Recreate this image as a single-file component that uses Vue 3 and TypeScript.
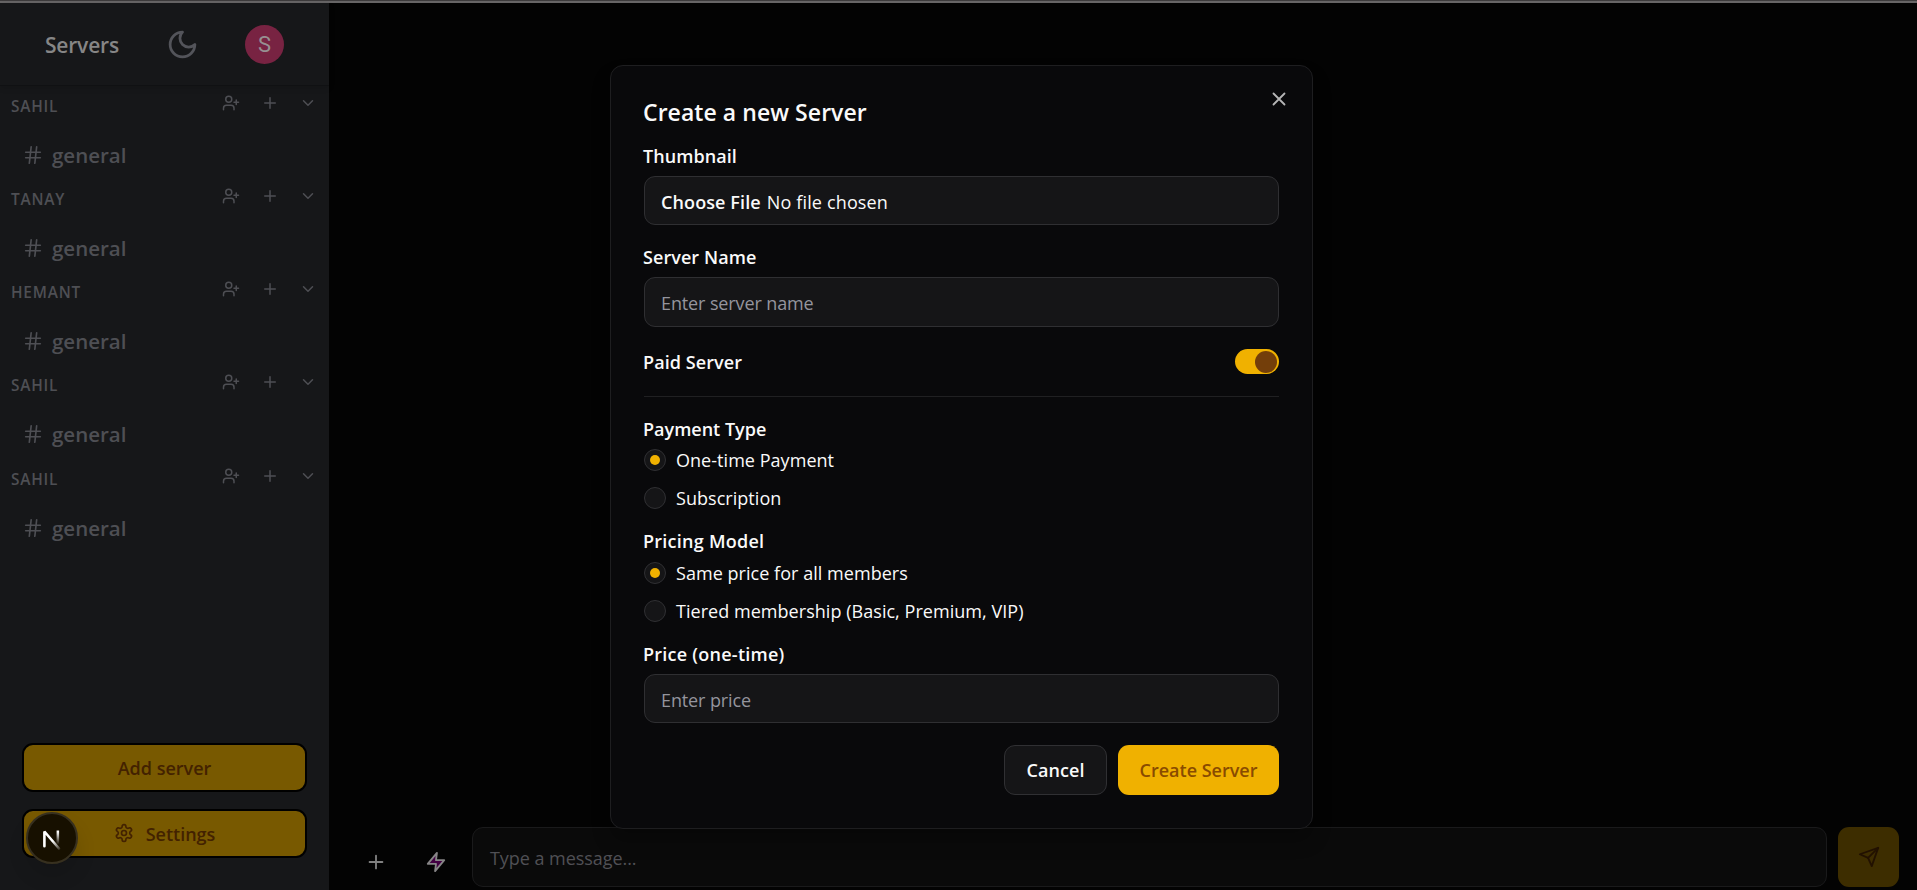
<script setup lang="ts">
import { ref } from 'vue'

interface Server { id: number; name: string }

const servers = ref<Server[]>([
  { id: 1, name: 'SAHIL' },
  { id: 2, name: 'TANAY' },
  { id: 3, name: 'HEMANT' },
  { id: 4, name: 'SAHIL' },
  { id: 5, name: 'SAHIL' },
])
const paymentTypes = ['One-time Payment', 'Subscription']
const pricingModels = ['Same price for all members', 'Tiered membership (Basic, Premium, VIP)']
const payment = ref(0)
const pricing = ref(0)
const paid = ref(true)
</script>

<template>
  <div class="page">
    <div class="edge"></div>
    <div class="shell">
      <aside class="sidebar">
        <header class="top">
          <h1>Servers</h1>
          <svg class="moon" viewBox="0 0 24 24"><path d="M12 3a6 6 0 0 0 9 9 9 9 0 1 1-9-9Z" /></svg>
          <div class="avatar">S</div>
        </header>
        <nav class="list">
          <section v-for="s in servers" :key="s.id" class="server">
            <div class="server-head">
              <span class="server-name">{{ s.name }}</span>
              <svg class="i-user" viewBox="0 0 24 24"><path d="M16 21v-2a4 4 0 0 0-4-4H6a4 4 0 0 0-4 4v2" /><circle cx="9" cy="7" r="4" /><path d="M19 8v6M22 11h-6" /></svg>
              <svg class="i-plus" viewBox="0 0 24 24"><path d="M5 12h14M12 5v14" /></svg>
              <svg class="i-chev" viewBox="0 0 24 24"><path d="m6 9 6 6 6-6" /></svg>
            </div>
            <div class="channel">
              <svg class="i-hash" viewBox="0 0 24 24"><path d="M4 9h16M4 15h16M10 3 8 21M16 3l-2 18" /></svg>
              <span class="general">general</span>
            </div>
          </section>
        </nav>
        <footer class="side-actions">
          <button class="gold"><span>Add server</span></button>
          <button class="gold">
            <svg class="i-gear" viewBox="0 0 24 24"><path d="M12.22 2h-.44a2 2 0 0 0-2 2v.18a2 2 0 0 1-1 1.73l-.43.25a2 2 0 0 1-2 0l-.15-.08a2 2 0 0 0-2.73.73l-.22.38a2 2 0 0 0 .73 2.73l.15.1a2 2 0 0 1 1 1.72v.51a2 2 0 0 1-1 1.74l-.15.09a2 2 0 0 0-.73 2.73l.22.38a2 2 0 0 0 2.73.73l.15-.08a2 2 0 0 1 2 0l.43.25a2 2 0 0 1 1 1.73V20a2 2 0 0 0 2 2h.44a2 2 0 0 0 2-2v-.18a2 2 0 0 1 1-1.73l.43-.25a2 2 0 0 1 2 0l.15.08a2 2 0 0 0 2.73-.73l.22-.39a2 2 0 0 0-.73-2.73l-.15-.08a2 2 0 0 1-1-1.74v-.5a2 2 0 0 1 1-1.74l.15-.09a2 2 0 0 0 .73-2.73l-.22-.38a2 2 0 0 0-2.73-.73l-.15.08a2 2 0 0 1-2 0l-.43-.25a2 2 0 0 1-1-1.73V4a2 2 0 0 0-2-2z" /><circle cx="12" cy="12" r="3" /></svg>
            <span>Settings</span>
          </button>
        </footer>
      </aside>
      <main class="chat">
        <div class="composer">
          <svg class="c-plus" viewBox="0 0 24 24"><path d="M5 12h14M12 5v14" /></svg>
          <svg class="c-zap" viewBox="0 0 24 24"><path d="M13 2 3 14h9l-1 8 10-12h-9Z" /></svg>
          <div class="message"><span>Type a message...</span></div>
          <button class="send">
            <svg viewBox="0 0 24 24"><path d="m22 2-7 20-4-9-9-4Z" /><path d="M22 2 11 13" /></svg>
          </button>
        </div>
      </main>
    </div>

    <div class="dev-badge">
      <svg viewBox="0 0 52 52">
        <defs>
          <linearGradient id="stem" x1="0" y1="0" x2="0" y2="1"><stop offset="0.1" stop-color="#fff" /><stop offset="1" stop-color="#fff" stop-opacity="0" /></linearGradient>
          <linearGradient id="diag" gradientUnits="userSpaceOnUse" x1="28" y1="28" x2="35" y2="37"><stop offset="0" stop-color="#fff" /><stop offset="1" stop-color="#fff" stop-opacity="0.1" /></linearGradient>
        </defs>
        <path d="M18.4 34.3V19.5L33 36.5" fill="none" stroke="url(#diag)" stroke-width="2.6" stroke-linejoin="bevel" />
        <rect x="30.6" y="18.5" width="2.5" height="14" fill="url(#stem)" />
      </svg>
    </div>

    <div class="dialog" role="dialog">
      <svg class="close" viewBox="0 0 24 24"><path d="M18 6 6 18M6 6l12 12" /></svg>
      <h2>Create a new Server</h2>
      <label class="thumb-label">Thumbnail</label>
      <div class="field"><span class="choose">Choose File</span><span class="nofile">No file chosen</span></div>
      <label class="name-label">Server Name</label>
      <div class="field tall"><span class="ph">Enter server name</span></div>
      <div class="paid">
        <span class="lbl">Paid Server</span>
        <button class="switch" :class="{ on: paid }" @click="paid = !paid"><i></i></button>
      </div>
      <hr />
      <label class="type-label">Payment Type</label>
      <div v-for="(p, i) in paymentTypes" :key="p" class="radio" @click="payment = i">
        <i class="dot" :class="{ on: payment === i }"></i><span>{{ p }}</span>
      </div>
      <label class="group-label model-label">Pricing Model</label>
      <div v-for="(p, i) in pricingModels" :key="p" class="radio" @click="pricing = i">
        <i class="dot" :class="{ on: pricing === i }"></i><span>{{ p }}</span>
      </div>
      <label class="group-label price-label">Price (one-time)</label>
      <div class="field"><span class="ph">Enter price</span></div>
      <div class="actions">
        <button class="cancel"><span>Cancel</span></button>
        <button class="create"><span>Create Server</span></button>
      </div>
    </div>
  </div>
</template>

<style>
html, body { margin: 0; background: #030303; overflow: hidden; }
</style>

<style scoped>
* { box-sizing: border-box; }
.page {
  position: relative; width: 100vw; height: 890px; overflow: hidden;
  background: #030303; color: #fafafa;
  font-family: "Open Sans", "Noto Sans", sans-serif; font-size: 18px;
  display: flex; flex-direction: column;
}
svg { fill: none; stroke: currentColor; stroke-width: 2; stroke-linecap: round; stroke-linejoin: round; flex: none; }
button { font: inherit; margin: 0; padding: 0; border: 0; }
span { white-space: nowrap; }
.edge { flex: none; height: 3px; background: #676566; border-top: 1px solid #3d3b3c; }
.shell { flex: 1; display: flex; min-height: 0; }
.sidebar { width: 329px; background: #161719; display: flex; flex-direction: column; }
.top { height: 83px; display: flex; align-items: center; padding-left: 45px; border-bottom: 1px solid #101113; box-shadow: 0 2px 6px rgba(0, 0, 0, .12); }
h1 { margin: 1px 0 0; font-size: 21px; line-height: 28px; font-weight: 600; color: #868686; width: 121px; letter-spacing: -.2px; }
.moon { width: 33px; height: 33px; color: #53545a; }
.avatar { margin-left: 46px; width: 39px; height: 39px; border-radius: 50%; background: #782342; color: #979092; font: 22px Roboto, sans-serif; display: flex; align-items: center; justify-content: center; }
.list { flex: 1; }
.server { height: 93.25px; }
.server-head { height: 40px; display: flex; align-items: center; padding: 0 12px 0 11px; color: #4e4f54; }
.server-name { flex: 1; font-size: 15.4px; font-weight: 600; letter-spacing: .8px; }
.server-head svg { width: 18px; height: 18px; margin-top: -7px; }
.server-head .i-user { margin-right: 21px; }
.server-head .i-plus { margin-right: 20px; }
.channel { height: 53px; display: flex; align-items: center; padding: 4px 0 0 22px; color: #4e4f54; }
.i-hash { width: 22px; height: 22px; margin-right: 8px; stroke-width: 1.8; }
.general { font-size: 20.5px; font-weight: 600; }
.side-actions { height: 147px; padding: 0 22px; display: flex; flex-direction: column; gap: 17px; }
.gold { height: 49px; border: 2px solid #000; border-radius: 11px; background: #785900; color: #432200; font-weight: 600; display: flex; align-items: center; justify-content: center; }
.i-gear { width: 20px; height: 20px; margin: -2px 12px 0 0; }
.chat { flex: 1; display: flex; flex-direction: column; justify-content: flex-end; }
.composer { height: 63px; display: flex; padding-right: 18px; }
.c-plus { width: 22px; height: 22px; margin: 24px 0 0 36px; color: #818181; }
.c-zap { width: 22px; height: 22px; margin: 24px 0 0 38px; color: #878587; fill: #430043; }
.message { flex: 1; height: 60px; margin-left: 25px; border: 1px solid #1a1a1b; border-radius: 11px; background: #0a0a0a; color: #505055; display: flex; align-items: center; padding: 2px 0 0 17px; letter-spacing: -.05px; }
.send { width: 61px; height: 60px; margin-left: 11px; border-radius: 11px; background: #3d2d00; color: #221100; display: flex; align-items: center; justify-content: center; }
.send svg { width: 22px; height: 22px; }
.dev-badge { position: absolute; left: 26px; top: 812px; width: 52px; height: 52px; border-radius: 50%; background: #171000; border: 2px solid #37301f; box-shadow: 0 12px 20px rgba(0, 0, 0, .12); }
.dev-badge svg { display: block; width: 52px; height: 52px; margin: -2px; stroke: none; }
.dialog { position: absolute; left: 610px; top: 65px; width: 703px; height: 764px; padding: 0 33px; border: 1px solid #1e1e20; border-radius: 13px; background: #09090b; box-shadow: 0 12px 18px rgba(0, 0, 0, .25); display: flex; flex-direction: column; }
.close { position: absolute; right: 22px; top: 22px; width: 22px; height: 22px; color: #b5b5b6; }
h2 { margin: 31px 0 0 -1px; height: 31px; line-height: 30px; font-size: 23px; font-weight: 600; letter-spacing: .06px; }
label, .lbl, .choose, .cancel { font-weight: 600; letter-spacing: .07px; }
label { display: block; flex: none; height: 24px; line-height: 24px; margin-left: -1px; }
.thumb-label { margin-top: 16px; margin-bottom: 8px; }
.field { flex: none; height: 49px; border: 1px solid #2f2f32; border-radius: 11px; background: #151517; padding: 2px 0 0 16px; display: flex; align-items: center; }
.field.tall { height: 50px; }
.choose { margin-right: 6px; letter-spacing: .1px; }
.nofile { letter-spacing: .15px; }
.ph { color: #94949d; letter-spacing: -.12px; }
.name-label { margin-top: 20px; margin-bottom: 8px; }
.paid { height: 25px; margin-top: 22px; display: flex; justify-content: space-between; align-items: center; }
.lbl { margin-left: -1px; }
.switch { width: 44px; height: 25px; border-radius: 13px; background: #f0b100; padding: 1px 2px; display: flex; align-items: center; }
.switch i { width: 22px; height: 22px; border-radius: 50%; background: #733e0a; }
.switch.on { justify-content: flex-end; }
hr { width: 100%; margin: 22px 0 20px; border: 0; height: 1px; flex: none; background: #202022; }
.type-label { letter-spacing: 0; }
.group-label { margin-top: 12px; margin-bottom: 1px; }
.model-label, .price-label { letter-spacing: .25px; }
.radio { height: 38px; display: flex; align-items: center; letter-spacing: .04px; }
.dot { width: 22px; height: 22px; border: 1px solid #303033; border-radius: 50%; background: #151517; margin-right: 10px; display: flex; align-items: center; justify-content: center; }
.dot.on::after { content: ""; width: 10px; height: 10px; border-radius: 50%; background: #f0b100; }
.price-label { margin-bottom: 8px; }
.actions { margin-top: 22px; display: flex; justify-content: flex-end; gap: 11px; }
.cancel, .create { height: 50px; border-radius: 11px; display: flex; align-items: center; justify-content: center; }
.cancel { width: 103px; background: #151517; border: 1px solid #303033; color: #fafafa; }
.create { width: 161px; font-weight: 600; background: #f0b100; color: #894b00; }
</style>
